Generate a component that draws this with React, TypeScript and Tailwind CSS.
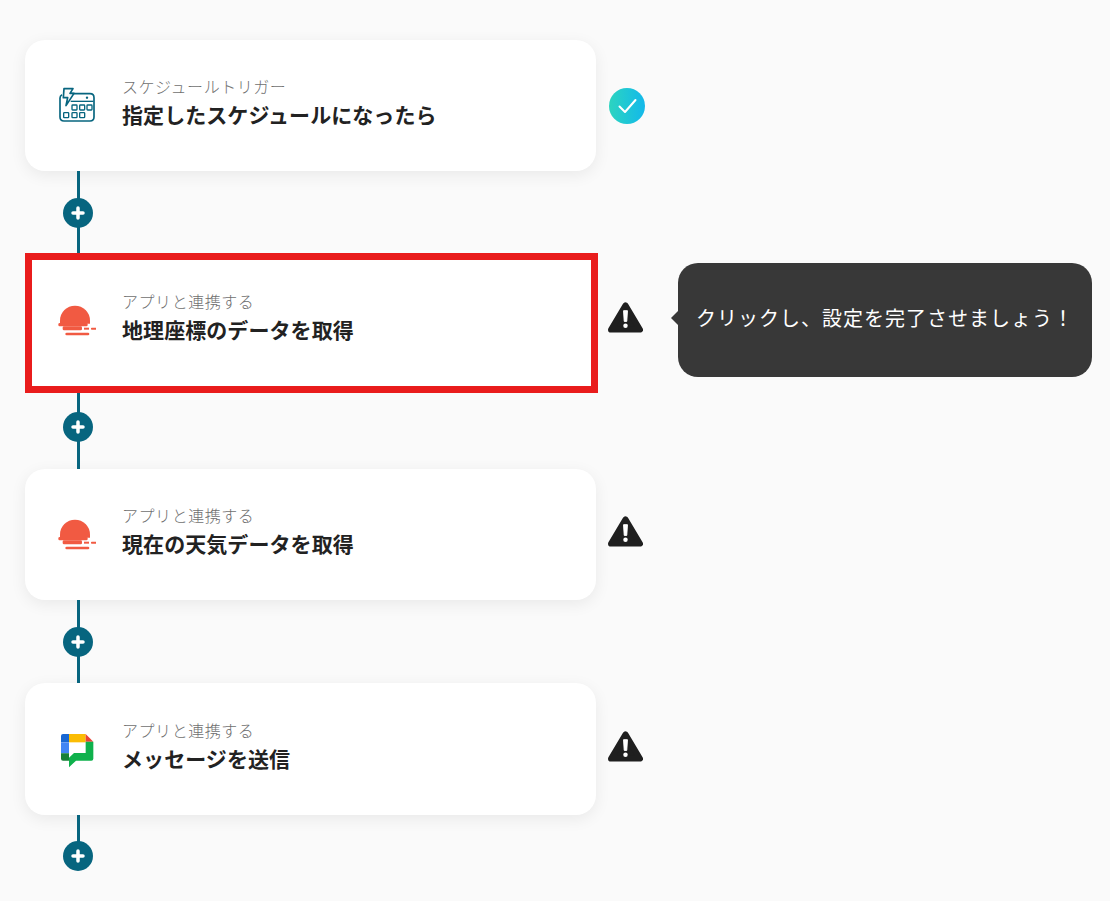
const CalendarIcon = () => (
  <svg viewBox="48 48 120 120" className="h-10 w-10 shrink-0" fill="none" stroke="#07657f">
    <path d="M78 71H150Q162 71 162 83V141Q162 153 150 153H72Q60 153 60 141V84Q60 77 66 74" strokeWidth="5" />
    <path d="M92 94H160" strokeWidth="4" />
    <path d="M72 56H99L90 70H102L78 107L83 83H70Z" fill="#fafafa" strokeWidth="5" strokeLinejoin="round" />
    <circle cx="141" cy="83" r="3.500" fill="#07657f" stroke="none" />
    <g strokeWidth="4">
      <rect x="96" y="105" width="15" height="15" rx="2" />
      <rect x="119" y="105" width="15" height="15" rx="2" />
      <rect x="141" y="105" width="15" height="15" rx="2" />
      <rect x="71" y="128" width="15" height="15" rx="2" />
      <rect x="96" y="128" width="15" height="15" rx="2" />
      <rect x="119" y="128" width="15" height="15" rx="2" />
    </g>
  </svg>
);

const SunIcon = () => (
  <svg viewBox="48 48 120 120" className="h-10 w-10 shrink-0" fill="#f15a42">
    <path d="M60 116V107A45 45 0 0 1 150 107V116Z" />
    <rect x="55" y="114" width="88" height="10" rx="4" />
    <rect x="68" y="124" width="58" height="12" rx="4" />
    <rect x="132" y="128" width="15" height="6" />
    <rect x="153" y="128" width="17" height="6" rx="2" />
    <rect x="76" y="143" width="72" height="8" rx="4" />
  </svg>
);

const ChatIcon = () => (
  <svg viewBox="48 48 120 120" className="mt-[4px] h-10 w-10 shrink-0">
    <path d="M137 57H87V82H137Z" fill="#fbbc04" />
    <path d="M87 57H69Q63 57 63 63V82H87Z" fill="#1967d2" />
    <path d="M63 82H87V115H63Z" fill="#4285f4" />
    <path d="M63 115H87V137H69Q63 137 63 131Z" fill="#188038" />
    <path d="M137 57L160 80H137Z" fill="#ea4335" />
    <path d="M137 80H160V131Q160 137 154 137H108L87 157V128L102 114H137Z" fill="#0fb14c" />
  </svg>
);

const WarningIcon = () => (
  <svg viewBox="0 0 36 33" className="h-[33px] w-[35px] shrink-0">
    <path d="M18 4L33 29H3Z" fill="#1f1f1f" stroke="#1f1f1f" strokeWidth="6" strokeLinejoin="round" />
    <path d="M16 9.500H20L19.300 20.500H16.700Z" fill="#ffffff" stroke="#ffffff" strokeWidth="1" strokeLinejoin="round" />
    <circle cx="18" cy="25" r="2.300" fill="#ffffff" />
  </svg>
);

const DoneIcon = () => (
  <div className="flex h-9 w-9 shrink-0 items-center justify-center rounded-full bg-gradient-to-r from-[#2dd4bf] to-[#14b8ea]">
    <svg viewBox="0 0 20 20" className="h-5 w-5" fill="none" stroke="#ffffff" strokeWidth="2" strokeLinecap="round" strokeLinejoin="round">
      <path d="M2.500 10.500L8 16L18.500 4" />
    </svg>
  </div>
);

const Connector = (props: { top: number; height: number }) => (
  <div className="relative ml-[52px] w-[3px] bg-[#07657f]" style={{ height: props.height }}>
    <div
      className="absolute left-[-14px] flex h-[30px] w-[30px] items-center justify-center rounded-full bg-[#07657f]"
      style={{ top: props.top }}
    >
      <svg viewBox="0 0 14 14" className="h-3.5 w-3.5" stroke="#ffffff" strokeWidth="3.500" strokeLinecap="round">
        <path d="M7 2V12M2 7H12" />
      </svg>
    </div>
  </div>
);

const CardBody = (props: { icon: React.ReactNode; label: string; title: string }) => (
  <>
    {props.icon}
    <div className="mb-[8px] ml-[27px] flex flex-col">
      <div className="ml-[-1px] text-[16px] leading-[24px] font-light tracking-[0.55px] text-[#6f6f6f]">{props.label}</div>
      <div className="mt-[1px] ml-[-1px] text-[21px] leading-[30px] font-bold tracking-[0.07px] text-[#222222]">{props.title}</div>
    </div>
  </>
);

const App = () => {
  return (
    <div className="h-[901px] w-[1110px] overflow-hidden bg-[#fafafa] pt-[40px] pl-[25px] font-['Noto_Sans_CJK_JP','Noto_Sans',sans-serif]">
      <div className="flex items-center">
        <div className="flex h-[131px] w-[571px] items-center rounded-[20px] bg-white pl-[31px] shadow-[0_4px_16px_rgba(0,0,0,0.07)]">
          <CardBody icon={<CalendarIcon />} label="スケジュールトリガー" title="指定したスケジュールになったら" />
        </div>
        <div className="ml-[13px]">
          <DoneIcon />
        </div>
      </div>
      <Connector top={27} height={82} />
      <div className="relative flex items-center">
        <div className="flex h-[140px] w-[573px] items-center border-[7px] border-[#e91c1c] bg-white pb-[5px] pl-[24px]">
          <CardBody icon={<SunIcon />} label="アプリと連携する" title="地理座標のデータを取得" />
        </div>
        <div className="mb-[12px] ml-[10px]">
          <WarningIcon />
        </div>
        <div className="absolute top-[10px] left-[653px] flex h-[114px] w-[414px] items-center rounded-[20px] bg-[#383838] pb-[4px] pl-[18px] text-[20px] tracking-[1px] whitespace-nowrap text-white">
          <div className="absolute top-[47px] left-[-7px] h-0 w-0 border-y-[8px] border-r-[8px] border-y-transparent border-r-[#383838]" />
          クリックし、設定を完了させましょう！
        </div>
      </div>
      <Connector top={19} height={76} />
      <div className="flex items-center">
        <div className="flex h-[131px] w-[571px] items-center rounded-[20px] bg-white pl-[31px] shadow-[0_4px_16px_rgba(0,0,0,0.07)]">
          <CardBody icon={<SunIcon />} label="アプリと連携する" title="現在の天気データを取得" />
        </div>
        <div className="mb-[6px] ml-[12px]">
          <WarningIcon />
        </div>
      </div>
      <Connector top={27} height={83} />
      <div className="flex items-center">
        <div className="flex h-[132px] w-[571px] items-center rounded-[20px] bg-white pl-[31px] shadow-[0_4px_16px_rgba(0,0,0,0.07)]">
          <CardBody icon={<ChatIcon />} label="アプリと連携する" title="メッセージを送信" />
        </div>
        <div className="mb-[6px] ml-[12px]">
          <WarningIcon />
        </div>
      </div>
      <Connector top={26} height={40} />
    </div>
  );
};

export default App;
